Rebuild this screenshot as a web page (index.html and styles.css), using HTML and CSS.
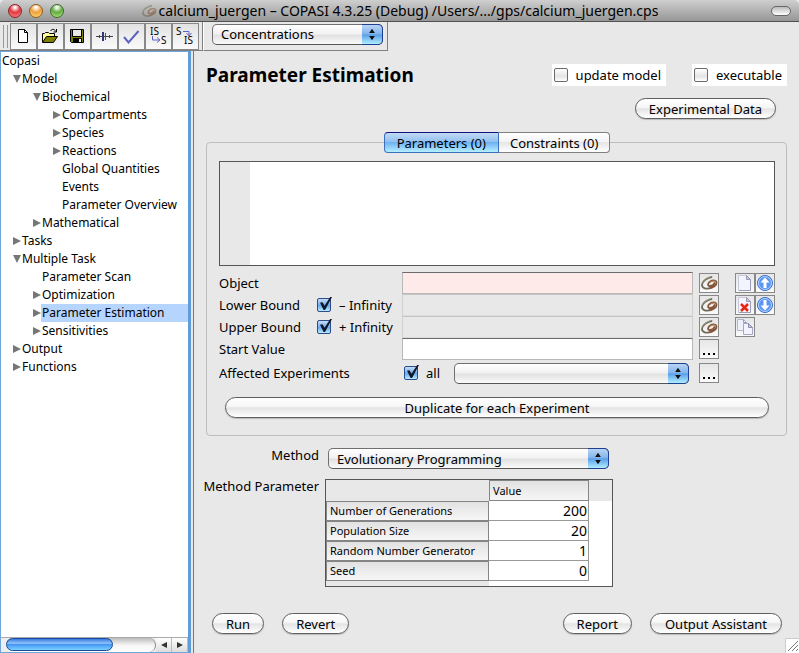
FILE: index.html
```html
<!DOCTYPE html>
<html lang="en">
<head>
<meta charset="utf-8">
<title>calcium_juergen – COPASI 4.3.25</title>
<link rel="stylesheet" href="styles.css">
</head>
<body>
<svg class="defs" aria-hidden="true">
  <symbol id="loop" viewBox="0 0 18 18">
    <g fill="none" stroke-linecap="round">
      <path d="M11.500 3C6.500 4 2 7.500 2 11c0 3.500 4.500 4.200 8.500 3" stroke="#6c6a58" stroke-width="1.800"/>
      <path d="M9 14.300c4-.5 8-3 7.500-6C16 6 12.500 6 9.800 7.800c-2.300 1.700-2.300 4.200 0 4.200 2 0 4.200-1.500 4.700-3" stroke="#85573a" stroke-width="1.800"/>
      <path d="M11 2.500C6.500 3.500 2.500 7 1.700 9.500" stroke="#b3b59e" stroke-width=".8"/>
      <path d="M10 8.500c2-1.700 4.500-1.900 5.500-1" stroke="#c89a70" stroke-width=".8"/>
    </g>
  </symbol>
  <symbol id="page" viewBox="0 0 18 18">
    <path d="M2.500 1.500h8l4 4v11h-12z" fill="#f3f4fd" stroke="#c6c9dc"/>
    <path d="M14.500 6v10.500H3" fill="none" stroke="#9a9db8"/>
    <path d="M10.500 1.500v4h4z" fill="#c4c7dc" stroke="#9a9db8"/>
  </symbol>
  <symbol id="arrows" viewBox="0 0 20 20">
    <path d="M10 4l3 4.500H7zM10 16l3-4.500H7z" fill="#111"/>
  </symbol>
</svg>
<div class="window">
  <header class="titlebar">
    <div class="lights"><i class="light red"></i><i class="light amber"></i><i class="light green"></i></div>
    <div class="title"><svg class="title-icon"><use href="#loop"/></svg><span>calcium_juergen – COPASI 4.3.25 (Debug) /Users/.../gps/calcium_juergen.cps</span></div>
    <i class="pill"></i>
  </header>

  <div class="toolbars">
    <div class="toolbar">
      <i class="handle"></i>
      <button class="tool" aria-label="New"><svg viewBox="0 0 25 25"><path d="M7.500 5.500h6l3 3v10h-9z" fill="#fff" stroke="#000"/><path d="M13.500 5.500v3h3" fill="none" stroke="#000"/></svg></button>
      <button class="tool" aria-label="Open"><svg viewBox="0 0 25 25"><path d="M4.500 18V9.500h2l1-1h3l1 1h5v3" fill="#ffffa0" stroke="#000"/><path d="M4.500 18.500l4-6h11l-4 6z" fill="#808000" stroke="#000"/><path d="M12.500 7c1.500-2.500 4-2 5.500.5M18.500 5v3h-3" fill="none" stroke="#000"/></svg></button>
      <button class="tool" aria-label="Save"><svg viewBox="0 0 25 25"><path d="M5.500 5.500h13v13h-12l-1-1z" fill="#808000" stroke="#000"/><path d="M8 6h8v6H8z" fill="#e8e8e8"/><path d="M7.500 6v6.500h9V6" fill="none" stroke="#000"/><path d="M8 14h9v5H8z" fill="#000"/><path d="M14 15h2v3h-2z" fill="#eee"/></svg></button>
      <button class="tool" aria-label="Slider"><svg viewBox="0 0 25 25"><path d="M4 12.500h17M7.500 11v3M17.500 11v3" stroke="#444" fill="none"/><path d="M10 8h2v9h-2z" fill="#343477"/><path d="M13 9h1v7h-1z" fill="#555"/></svg></button>
      <button class="tool" aria-label="Check"><svg viewBox="0 0 25 25"><path d="M5 13l4.500 5.500L19.500 7" fill="none" stroke="#5e63bd" stroke-width="2"/></svg></button>
      <button class="tool" aria-label="Convert to reaction"><svg viewBox="0 0 25 25"><text x="4" y="11">IS</text><text x="15" y="20">S</text><path d="M6.500 12v4h7M11 13.500l3 2.500-3 2.500" fill="none" stroke="#5e63bd"/></svg></button>
      <button class="tool" aria-label="Convert to equations"><svg viewBox="0 0 25 25"><text x="3" y="11">S</text><text x="11" y="20">IS</text><path d="M10 7.500h6v4M13.500 9l2.500 3 2.500-3" fill="none" stroke="#5e63bd"/></svg></button>
    </div>
    <div class="toolbar units">
      <div class="pick raised"><select aria-label="Units"><option>Concentrations</option></select><svg class="cap"><use href="#arrows"/></svg></div>
    </div>
  </div>

  <div class="body">
    <nav class="sidebar">
      <ul class="tree">
        <li><a href="#">Copasi</a></li>
        <li class="l1 open"><a href="#">Model</a></li>
        <li class="l2 open"><a href="#">Biochemical</a></li>
        <li class="l3 closed"><a href="#">Compartments</a></li>
        <li class="l3 closed"><a href="#">Species</a></li>
        <li class="l3 closed"><a href="#">Reactions</a></li>
        <li class="l3"><a href="#">Global Quantities</a></li>
        <li class="l3"><a href="#">Events</a></li>
        <li class="l3"><a href="#">Parameter Overview</a></li>
        <li class="l2 closed"><a href="#">Mathematical</a></li>
        <li class="l1 closed"><a href="#">Tasks</a></li>
        <li class="l1 open"><a href="#">Multiple Task</a></li>
        <li class="l2"><a href="#">Parameter Scan</a></li>
        <li class="l2 closed"><a href="#">Optimization</a></li>
        <li class="l2 closed"><a href="#" class="current">Parameter Estimation</a></li>
        <li class="l2 closed"><a href="#">Sensitivities</a></li>
        <li class="l1 closed"><a href="#">Output</a></li>
        <li class="l1 closed"><a href="#">Functions</a></li>
      </ul>
      <div class="scroll">
        <div class="track"><i class="thumb"></i></div>
        <button aria-label="Scroll left"><svg viewBox="0 0 16 14"><path d="M11 4v6L5 7z" fill="#333"/></svg></button>
        <button aria-label="Scroll right"><svg viewBox="0 0 16 14"><path d="M5 4v6l6-3z" fill="#333"/></svg></button>
      </div>
    </nav>

    <main class="content">
      <div class="heading">
        <h1>Parameter Estimation</h1>
        <label class="tick-box"><input type="checkbox">update model</label>
        <label class="tick-box"><input type="checkbox">executable</label>
      </div>
      <div class="data-row"><button class="push">Experimental Data</button></div>

      <section class="group">
        <div class="tabs"><button class="tab active">Parameters (0)</button><button class="tab">Constraints (0)</button></div>
        <div class="list"></div>
        <div class="form">
          <label class="name" for="object">Object</label>
          <span></span>
          <input class="field invalid" id="object" type="text">
          <button class="mini" aria-label="Select object"><svg><use href="#loop"/></svg></button>
          <div class="actions">
            <button class="mini" aria-label="New item"><svg><use href="#page"/></svg></button>
            <button class="mini" aria-label="Move up"><svg viewBox="0 0 18 18"><circle cx="9" cy="9" r="7.500" fill="#5a97f2" stroke="#3a6dd0"/><circle cx="9" cy="9" r="6.500" fill="none" stroke="#b8d5ff"/><path d="M9 3.500l4.500 5h-3V14h-3V8.500h-3z" fill="#fff"/></svg></button>
          </div>

          <label class="name" for="lower">Lower Bound</label>
          <label class="check"><input type="checkbox" checked>– Infinity</label>
          <input class="field off" id="lower" type="text" disabled>
          <button class="mini" aria-label="Select lower bound"><svg><use href="#loop"/></svg></button>
          <div class="actions">
            <button class="mini" aria-label="Delete item"><svg viewBox="0 0 18 18"><use href="#page"/><path d="M5 8l7 7M12 8l-7 7" stroke="#ec2413" stroke-width="2.500"/></svg></button>
            <button class="mini" aria-label="Move down"><svg viewBox="0 0 18 18"><circle cx="9" cy="9" r="7.500" fill="#5a97f2" stroke="#3a6dd0"/><circle cx="9" cy="9" r="6.500" fill="none" stroke="#b8d5ff"/><path d="M9 14.500l4.500-5h-3V4h-3v5.500h-3z" fill="#fff"/></svg></button>
          </div>

          <label class="name" for="upper">Upper Bound</label>
          <label class="check"><input type="checkbox" checked>+ Infinity</label>
          <input class="field off" id="upper" type="text" disabled>
          <button class="mini" aria-label="Select upper bound"><svg><use href="#loop"/></svg></button>
          <div class="actions">
            <button class="mini" aria-label="Copy item"><svg viewBox="0 0 18 18"><path d="M1.500 1.500h6l3 3v8h-9z" fill="#eef0fb" stroke="#b4b7d0"/><path d="M7.500 1.500v3h3" fill="none" stroke="#9a9db8"/><path d="M7.500 5.500h5l4 4v7h-9z" fill="#f3f4fd" stroke="#a3a6c4"/><path d="M12.500 5.500v4h4z" fill="#c4c7dc" stroke="#8d90ae"/></svg></button>
          </div>

          <label class="name" for="start">Start Value</label>
          <span></span>
          <input class="field" id="start" type="text">
          <button class="mini" aria-label="Start value options"><svg viewBox="0 0 18 18"><path d="M3 13h2v2H3zM8 13h2v2H8zM13 13h2v2h-2z"/></svg></button>
          <span></span>

          <span class="name wide">Affected Experiments</span>
          <div class="affected">
            <label class="check"><input type="checkbox" checked>all</label>
            <div class="pick"><select aria-label="Affected experiments"><option></option></select><svg class="cap"><use href="#arrows"/></svg></div>
          </div>
          <button class="mini" aria-label="Choose experiments"><svg viewBox="0 0 18 18"><path d="M3 13h2v2H3zM8 13h2v2H8zM13 13h2v2h-2z"/></svg></button>
          <span></span>
        </div>
        <button class="push full">Duplicate for each Experiment</button>
      </section>

      <div class="method">
        <label for="method">Method</label>
        <div class="pick"><select id="method"><option>Evolutionary Programming</option></select><svg class="cap"><use href="#arrows"/></svg></div>
        <span class="param-label">Method Parameter</span>
        <div class="params">
          <table>
            <thead><tr><td></td><th>Value</th></tr></thead>
            <tbody>
              <tr><th>Number of Generations</th><td>200</td></tr>
              <tr><th>Population Size</th><td>20</td></tr>
              <tr><th>Random Number Generator</th><td>1</td></tr>
              <tr><th>Seed</th><td>0</td></tr>
            </tbody>
          </table>
        </div>
      </div>

      <footer class="buttons">
        <button class="push">Run</button>
        <button class="push">Revert</button>
        <i class="spacer"></i>
        <button class="push">Report</button>
        <button class="push roomy">Output Assistant</button>
      </footer>
      <svg class="grip" viewBox="0 0 14 15"><path d="M0 0h14v15H0z" fill="#fff"/><path d="M.500 15V.500H14" fill="none" stroke="#ccc"/><path d="M3 13L13 3M7 13l6-6M11 13l2-2" stroke="#777" fill="none"/></svg>
    </main>
  </div>
</div>
</body>
</html>
```
FILE: styles.css
```css
* { box-sizing: border-box; }
body {
  margin: 0;
  background: #e8e8e8;
  color: #000;
  font: 13px/18px "Noto Sans", "Open Sans", sans-serif;
}
button, select, input { font: inherit; color: inherit; margin: 0; padding: 0; }
a { color: inherit; text-decoration: none; }
.defs { display: none; }
.window { display: flex; flex-direction: column; min-height: 100vh; }

/* Title bar */
.titlebar {
  display: flex;
  align-items: center;
  height: 22px;
  padding: 0 8px;
  background: linear-gradient(#cfcfcf, #969696);
  border-bottom: 1px solid #515151;
  border-radius: 5px 5px 0 0;
}
.lights { display: flex; gap: 7px; width: 64px; }
.light { width: 14px; height: 14px; border-radius: 50%; border: 1px solid #555; }
.red { background: radial-gradient(circle at 50% 20%, #fff 5%, #e2383f 45%, #ff8d8d); border-color: #8b2227; }
.amber { background: radial-gradient(circle at 50% 20%, #fff 5%, #efa03c 45%, #ffe07a); border-color: #8e5a22; }
.green { background: radial-gradient(circle at 50% 20%, #fff 5%, #62ab3e 45%, #b8ee88); border-color: #3b6a28; }
.title { flex: 1; display: flex; justify-content: center; align-items: center; gap: 2px; font-size: 14px; white-space: nowrap; }
.title-icon { width: 16px; height: 16px; opacity: .6; }
.pill { width: 20px; height: 10px; margin-left: 44px; border: 1px solid #666; border-radius: 5px; background: linear-gradient(#bbb, #fff); }

/* Toolbars */
.toolbars { display: flex; height: 29px; }
.toolbar { display: flex; align-items: center; padding: 1px 3px 0; border-bottom: 1px solid #808080; border-right: 1px solid #808080; }
.handle { width: 5px; height: 23px; margin-right: 2px; border: 1px solid #999; border-width: 0 1px; }
.tool { width: 27px; height: 27px; border: 1px solid #888; background: linear-gradient(#e2e2e2, #fafafa); }
.tool svg { display: block; width: 25px; height: 25px; }
.tool text { font: 10px "Noto Sans", sans-serif; }
.units { width: 185px; padding: 0 4px 4px 8px; border-left: 1px solid #fff; }
.units .pick { flex: 1; }
.pick.raised select { padding-bottom: 4px; }

/* Pop-up menus */
.pick { position: relative; height: 21px; }
.pick select {
  display: block;
  appearance: none;
  width: 100%;
  height: 21px;
  padding: 0 24px 0 8px;
  border: 1px solid #707070;
  border-bottom-color: #555;
  border-radius: 5px;
  background: linear-gradient(#fff, #f2f2f2 45%, #e2e2e2 55%, #fafafa);
}
.cap {
  position: absolute;
  top: 0;
  right: 0;
  width: 21px;
  height: 21px;
  border: 1px solid #1d3f96;
  border-left-width: 0;
  border-radius: 0 5px 5px 0;
  background: linear-gradient(#b9d4f3, #83b5ec 45%, #5b9fe8 52%, #b0eeff);
  pointer-events: none;
}

/* Sidebar */
.body { flex: 1; display: flex; }
.sidebar {
  display: flex;
  flex-direction: column;
  width: 191px;
  flex: none;
  background: #fff;
  border: 1px solid #6fa6dc;
  border-right: 3px solid #5f9cd8;
}
.tree { flex: 1; margin: 0; padding: 0; list-style: none; font-size: 12px; }
.tree li { display: flex; align-items: center; height: 18px; }
.tree a { flex: 1; padding-left: 1px; white-space: nowrap; }
.l1 { padding-left: 20px; }
.l2 { padding-left: 40px; }
.l3 { padding-left: 60px; }
.open::before, .closed::before { content: ""; width: 8px; height: 8px; margin-left: -8px; background: #777; }
.open::before { clip-path: polygon(0 0, 100% 0, 50% 100%); }
.closed::before { clip-path: polygon(0 0, 100% 50%, 0 100%); }
.current { background: #b5d5ff; }
.scroll { display: flex; height: 15px; border-top: 1px solid #aaa; background: #eee; }
.track { flex: 1; margin-left: 5px; border-radius: 7px; border-right: 1px solid #888; background: linear-gradient(#bbb, #f5f5f5 50%, #fff); }
.thumb {
  display: block;
  width: 72%;
  height: 13px;
  border: 1px solid #174aa0;
  border-radius: 7px;
  background: linear-gradient(#3a7de0, #8fc2fa 40%, #4596f3 50%, #7cd2ff);
}
.scroll button { width: 16px; border: 0; border-right: 1px solid #bbb; background: linear-gradient(#fff, #ddd); }
.scroll svg { display: block; width: 16px; height: 14px; }

/* Main panel */
.content {
  position: relative;
  flex: 1;
  min-width: 0;
  display: flex;
  flex-direction: column;
  margin-left: 2px;
  padding: 13px 12px 19px 12px;
  border-left: 1px solid #777;
}
.heading { display: flex; align-items: center; gap: 26px; height: 22px; }
h1 { flex: 1; margin: 0; font-size: 19px; line-height: 22px; font-weight: 700; white-space: nowrap; }
input[type="checkbox"] {
  appearance: none;
  position: relative;
  flex: none;
  width: 14px;
  height: 14px;
  margin: 0;
  border: 1px solid #6b6b6b;
  border-radius: 2px;
  background: linear-gradient(#fff, #e4e4e4 60%, #fff);
}
input[type="checkbox"]:checked { border-color: #2b4d8c; background: linear-gradient(#c6dcf5, #6aa8ee 55%, #b8ecff); }
input[type="checkbox"]:checked::after {
  content: "";
  position: absolute;
  left: 2px;
  top: -2px;
  width: 12px;
  height: 13px;
  background: #101828;
  clip-path: polygon(0 45%, 20% 40%, 38% 68%, 85% 0, 100% 0, 42% 100%, 30% 100%);
}
.tick-box, .check { display: flex; align-items: center; gap: 8px; white-space: nowrap; }
.tick-box { height: 22px; padding: 0 5px 0 2px; background: #fff; }
.data-row { display: flex; justify-content: flex-end; padding: 12px 11px 0 0; }
.push {
  height: 21px;
  padding: 0 13px;
  line-height: 18px;
  border: 1px solid #5e5e5e;
  border-radius: 11px;
  background: linear-gradient(#fff, #f6f6f6 45%, #e4e4e4 52%, #fff);
  box-shadow: 0 1px 1px #bbb;
  white-space: nowrap;
}
.push.roomy { padding: 0 14px; }
.group {
  display: flex;
  flex-direction: column;
  margin-top: 23px;
  padding: 0 11px 17px 12px;
  border: 1px solid #bdbdbd;
  border-radius: 4px;
}
.tabs { display: flex; justify-content: center; height: 21px; margin: -11px 0 8px; }
.tab { padding: 0 11px; line-height: 18px; border: 1px solid #808080; border-left: 0; border-radius: 0 4px 4px 0; background: linear-gradient(#fff, #f4f4f4 45%, #e6e6e6 50%, #fff); }
.tab.active { padding: 0 12px; border: 1px solid #3c70bd; border-top-color: #101080; border-radius: 4px 0 0 4px; background: linear-gradient(#c3dbf5, #93c0f0 45%, #6fb2f2 50%, #b4efff); }
.list { height: 105px; border: 1px solid #555; background: linear-gradient(90deg, #e8e8e8 30px, #fff 30px); }
.form {
  display: grid;
  grid-template-columns: 98px 85px minmax(0, 1fr) 26px 56px;
  grid-template-rows: repeat(4, 22px) 26px;
  align-items: center;
  margin-top: 6px;
}
.name { white-space: nowrap; }
.wide { grid-column: span 2; }
.field { width: 100%; height: 22px; padding: 0 4px; border: 1px solid #b8b8b8; border-top-color: #6c6c6c; border-radius: 0; background: #fff; }
.invalid { background: #ffeaea; }
.off { border-color: #c4c4c4 #d0d0d0 #dcdcdc; background: #e8e8e8; }
.mini { width: 20px; height: 20px; border: 1px solid #888; background: linear-gradient(#e6e6e6, #fafafa); }
.form > .mini { justify-self: end; }
.mini svg { display: block; width: 18px; height: 18px; }
.actions { display: flex; padding-left: 16px; }
.affected { display: flex; gap: 14px; padding: 0 4px 0 2px; }
.affected .pick { flex: 1; }
.push.full { margin: 11px 6px 0; }

/* Method settings */
.method {
  display: grid;
  grid-template-columns: 113px 288px;
  column-gap: 6px;
  row-gap: 10px;
  margin-top: 12px;
}
.method > label, .param-label { justify-self: end; white-space: nowrap; line-height: 14px; }
.method .pick { margin: 0 4px 0 3px; }
.params {
  height: 108px;
  border: 1px solid #555;
  background: linear-gradient(#e8e8e8 21px, transparent 21px), linear-gradient(90deg, #e8e8e8 163px, #fff 163px);
}
table { width: 263px; table-layout: fixed; border-collapse: separate; border-spacing: 0; }
tr { height: 20px; }
th, td { height: 20px; padding: 0 3px; line-height: 18px; }
th { font-size: 11px; font-weight: 400; text-align: left; border: 1px solid #858585; background: linear-gradient(#e2e2e2, #f6f6f6); white-space: nowrap; }
td { width: 100px; padding: 0 1px; font-size: 14px; text-align: right; }
thead td { width: 163px; }
thead td, thead th { height: 21px; }
tbody td { border: 1px solid #999; border-width: 0 1px 1px 0; }

.buttons { display: flex; gap: 18px; margin-top: auto; padding: 0 5px 0 6px; }
.spacer { flex: 1; }
.grip { position: absolute; right: 0; bottom: 0; width: 14px; height: 15px; }
```
